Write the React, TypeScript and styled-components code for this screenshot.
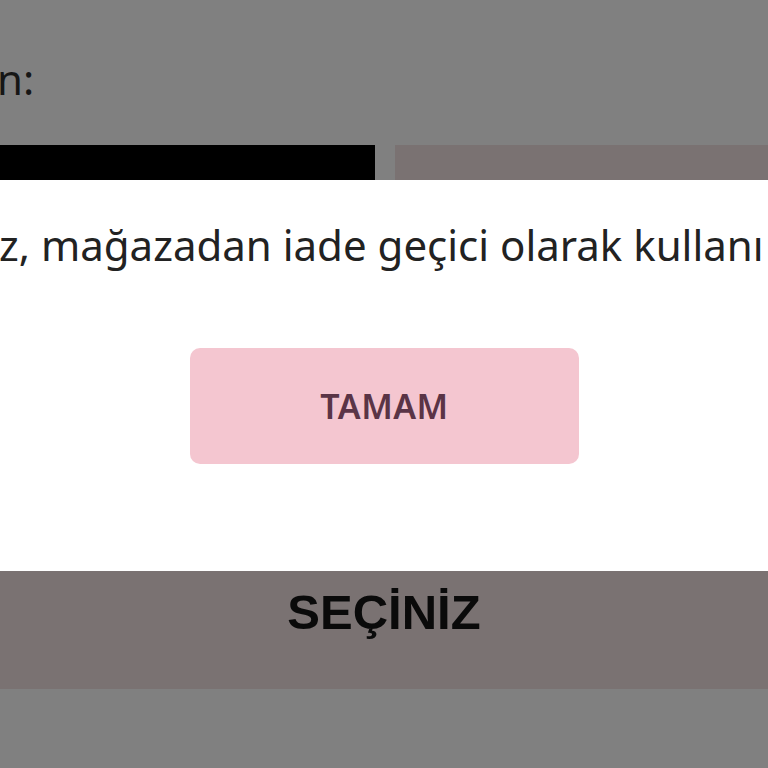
import React from "react";
import styled, { createGlobalStyle } from "styled-components";

const Global = createGlobalStyle`
  html, body { margin: 0; padding: 0; background: #808080; overflow: hidden; }
  #root { width: 768px; height: 768px; }
`;

const Page = styled.div`
  width: 768px;
  height: 768px;
  display: flex;
  flex-direction: column;
  background: #808080;
  overflow: hidden;
  font-family: "Noto Sans", "Open Sans", sans-serif;
`;

const Header = styled.div`
  height: 145px;
  display: flex;
  align-items: flex-start;
  padding-top: 52px;
  box-sizing: border-box;
`;

const Label = styled.span`
  font-size: 42px;
  line-height: 54px;
  color: #161616;
  margin-left: -3px;
`;

const BarRow = styled.div`
  height: 35px;
  display: flex;
  gap: 20px;
`;

const Bar = styled.div<{ $tone: string; $width?: string }>`
  background: ${(p) => p.$tone};
  ${(p) => (p.$width ? `width: ${p.$width};` : "flex: 1;")}
`;

const Modal = styled.div`
  height: 391px;
  background: #ffffff;
  display: flex;
  flex-direction: column;
  align-items: center;
  box-sizing: border-box;
  padding-top: 39px;
  overflow: hidden;
`;

const Message = styled.p`
  margin: 0;
  align-self: stretch;
  white-space: nowrap;
  font-size: 42px;
  line-height: 52px;
  color: #222222;
  margin-left: -1px;
`;

const OkButton = styled.button`
  margin-top: 77px;
  width: 389px;
  height: 116px;
  border: none;
  border-radius: 10px;
  background: #f4c6d0;
  color: #5a3446;
  font-family: "Noto Sans", "Open Sans", sans-serif;
  font-weight: 600;
  font-size: 34px;
  letter-spacing: 0.5px;
  display: flex;
  align-items: center;
  justify-content: center;
  padding: 0 0 0 1px;
`;

const SelectBar = styled.div`
  height: 118px;
  background: #7a7272;
  display: flex;
  justify-content: center;
  align-items: flex-start;
  padding-top: 13px;
  box-sizing: border-box;
`;

const SelectText = styled.span`
  font-family: "Liberation Sans", Arial, sans-serif;
  font-weight: 700;
  font-size: 49px;
  line-height: 56px;
  color: #0a0a0a;
`;

export default function App() {
  return (
    <Page>
      <Global />
      <Header>
        <Label>n:</Label>
      </Header>
      <BarRow>
        <Bar $tone="#000000" $width="375px" />
        <Bar $tone="#7a7272" />
      </BarRow>
      <Modal>
        <Message>z, mağazadan iade geçici olarak kullanı</Message>
        <OkButton>TAMAM</OkButton>
      </Modal>
      <SelectBar>
        <SelectText>SEÇİNİZ</SelectText>
      </SelectBar>
    </Page>
  );
}
